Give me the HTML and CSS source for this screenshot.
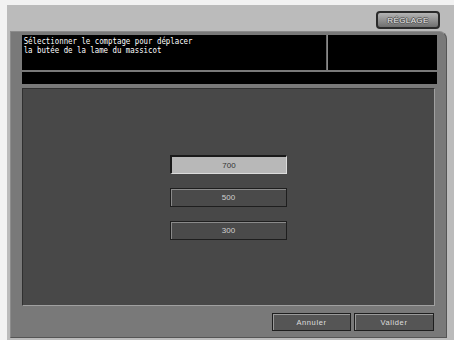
FILE: index.html
```html
<!DOCTYPE html>
<html lang="fr">
<head>
    <meta charset="UTF-8">
    <title>Réglage massicot</title>
    <link rel="stylesheet" href="styles.css">
</head>
<body>
    <div class="screen">
        <div class="topbar">
            <button class="tab-btn">RÉGLAGE</button>
        </div>
        <div class="panel">
            <div class="header">
                <div class="message">Sélectionner le comptage pour déplacer<br>la butée de la lame du massicot</div>
                <div class="message-side"></div>
            </div>
            <div class="status"></div>
            <div class="content">
                <button class="count-btn selected">700</button>
                <button class="count-btn">500</button>
                <button class="count-btn">300</button>
            </div>
            <div class="footer">
                <button class="action-btn cancel">Annuler</button>
                <button class="action-btn ok">Valider</button>
            </div>
        </div>
    </div>
</body>
</html>
```

FILE: styles.css
```css
html{
    background: #f2f2f2;
}
body{
    margin: 0;
    font-family: "DejaVu Sans Mono", "Liberation Mono", monospace;
}
.screen{
    margin: 5px 0 0 7px;
    width: 447px;
    height: 335px;
    background: #bbbbbb;
}
.topbar{
    height: 26px;
    display: flex;
    justify-content: flex-end;
    align-items: flex-start;
    padding-right: 14px;
    box-sizing: border-box;
}
.tab-btn{
    margin-top: 6px;
    width: 64px;
    height: 18px;
    padding: 0;
    border: 2px solid #2a2a2a;
    border-radius: 4px;
    background: linear-gradient(#b4b4b4, #8a8a8a 60%, #6e6e6e);
    color: #e8e8e8;
    font-family: "Liberation Sans", sans-serif;
    font-size: 8px;
    letter-spacing: 0.4px;
    text-shadow: 1px 0 #555, -1px 0 #555, 0 1px #555, 0 -1px #555;
}
.panel{
    margin-left: 3px;
    width: 437px;
    height: 307px;
    box-sizing: border-box;
    background: #797979;
    border: 1px solid #555;
    border-top-color: #8c8c8c;
    border-left-color: #8c8c8c;
    border-top-right-radius: 8px;
    padding: 3px 9px 0 11px;
    display: flex;
    flex-direction: column;
}
.header{
    height: 35px;
    display: grid;
    grid-template-columns: 304px 1fr;
    gap: 2px;
    background: #8a8a8a;
}
.message, .message-side{
    background: #000;
}
.message{
    color: #fff;
    font-size: 9px;
    line-height: 9px;
    padding: 2px 0 0 2px;
    white-space: nowrap;
    transform: scaleX(0.82);
    transform-origin: left top;
    width: 122%;
    box-sizing: border-box;
}
.status{
    margin-top: 2px;
    height: 12px;
    background: #000;
}
.content{
    margin: 4px 2px 0 0;
    height: 218px;
    box-sizing: border-box;
    background: #484848;
    border: 1px solid #a0a0a0;
    border-top-color: #303030;
    border-left-color: #303030;
    display: flex;
    flex-direction: column;
    align-items: center;
    gap: 14px;
    padding-top: 66px;
}
.count-btn{
    width: 117px;
    height: 19px;
    padding: 0;
    background: #4a4a4a;
    border: 1px solid #1e1e1e;
    box-shadow: inset 1px 1px #8a8a8a;
    color: #d0d0d0;
    font-family: "Liberation Sans", sans-serif;
    font-size: 8px;
}
.count-btn.selected{
    background: #b8b8b8;
    border-top: 2px solid #1a1a1a;
    border-left: 2px solid #1a1a1a;
    border-right: 1px solid #dcdcdc;
    border-bottom: 1px solid #dcdcdc;
    box-shadow: none;
    color: #333;
}
.footer{
    margin-top: 7px;
    display: flex;
    justify-content: flex-end;
    gap: 3px;
    padding-right: 3px;
}
.action-btn{
    height: 18px;
    padding: 0;
    background: #555;
    border: 1px solid #1e1e1e;
    box-shadow: inset 1px 1px #9a9a9a;
    color: #dedede;
    font-family: "Liberation Sans", sans-serif;
    font-size: 7.5px;
    letter-spacing: 0.6px;
}
.action-btn.cancel{
    width: 79px;
}
.action-btn.ok{
    width: 80px;
}
```
